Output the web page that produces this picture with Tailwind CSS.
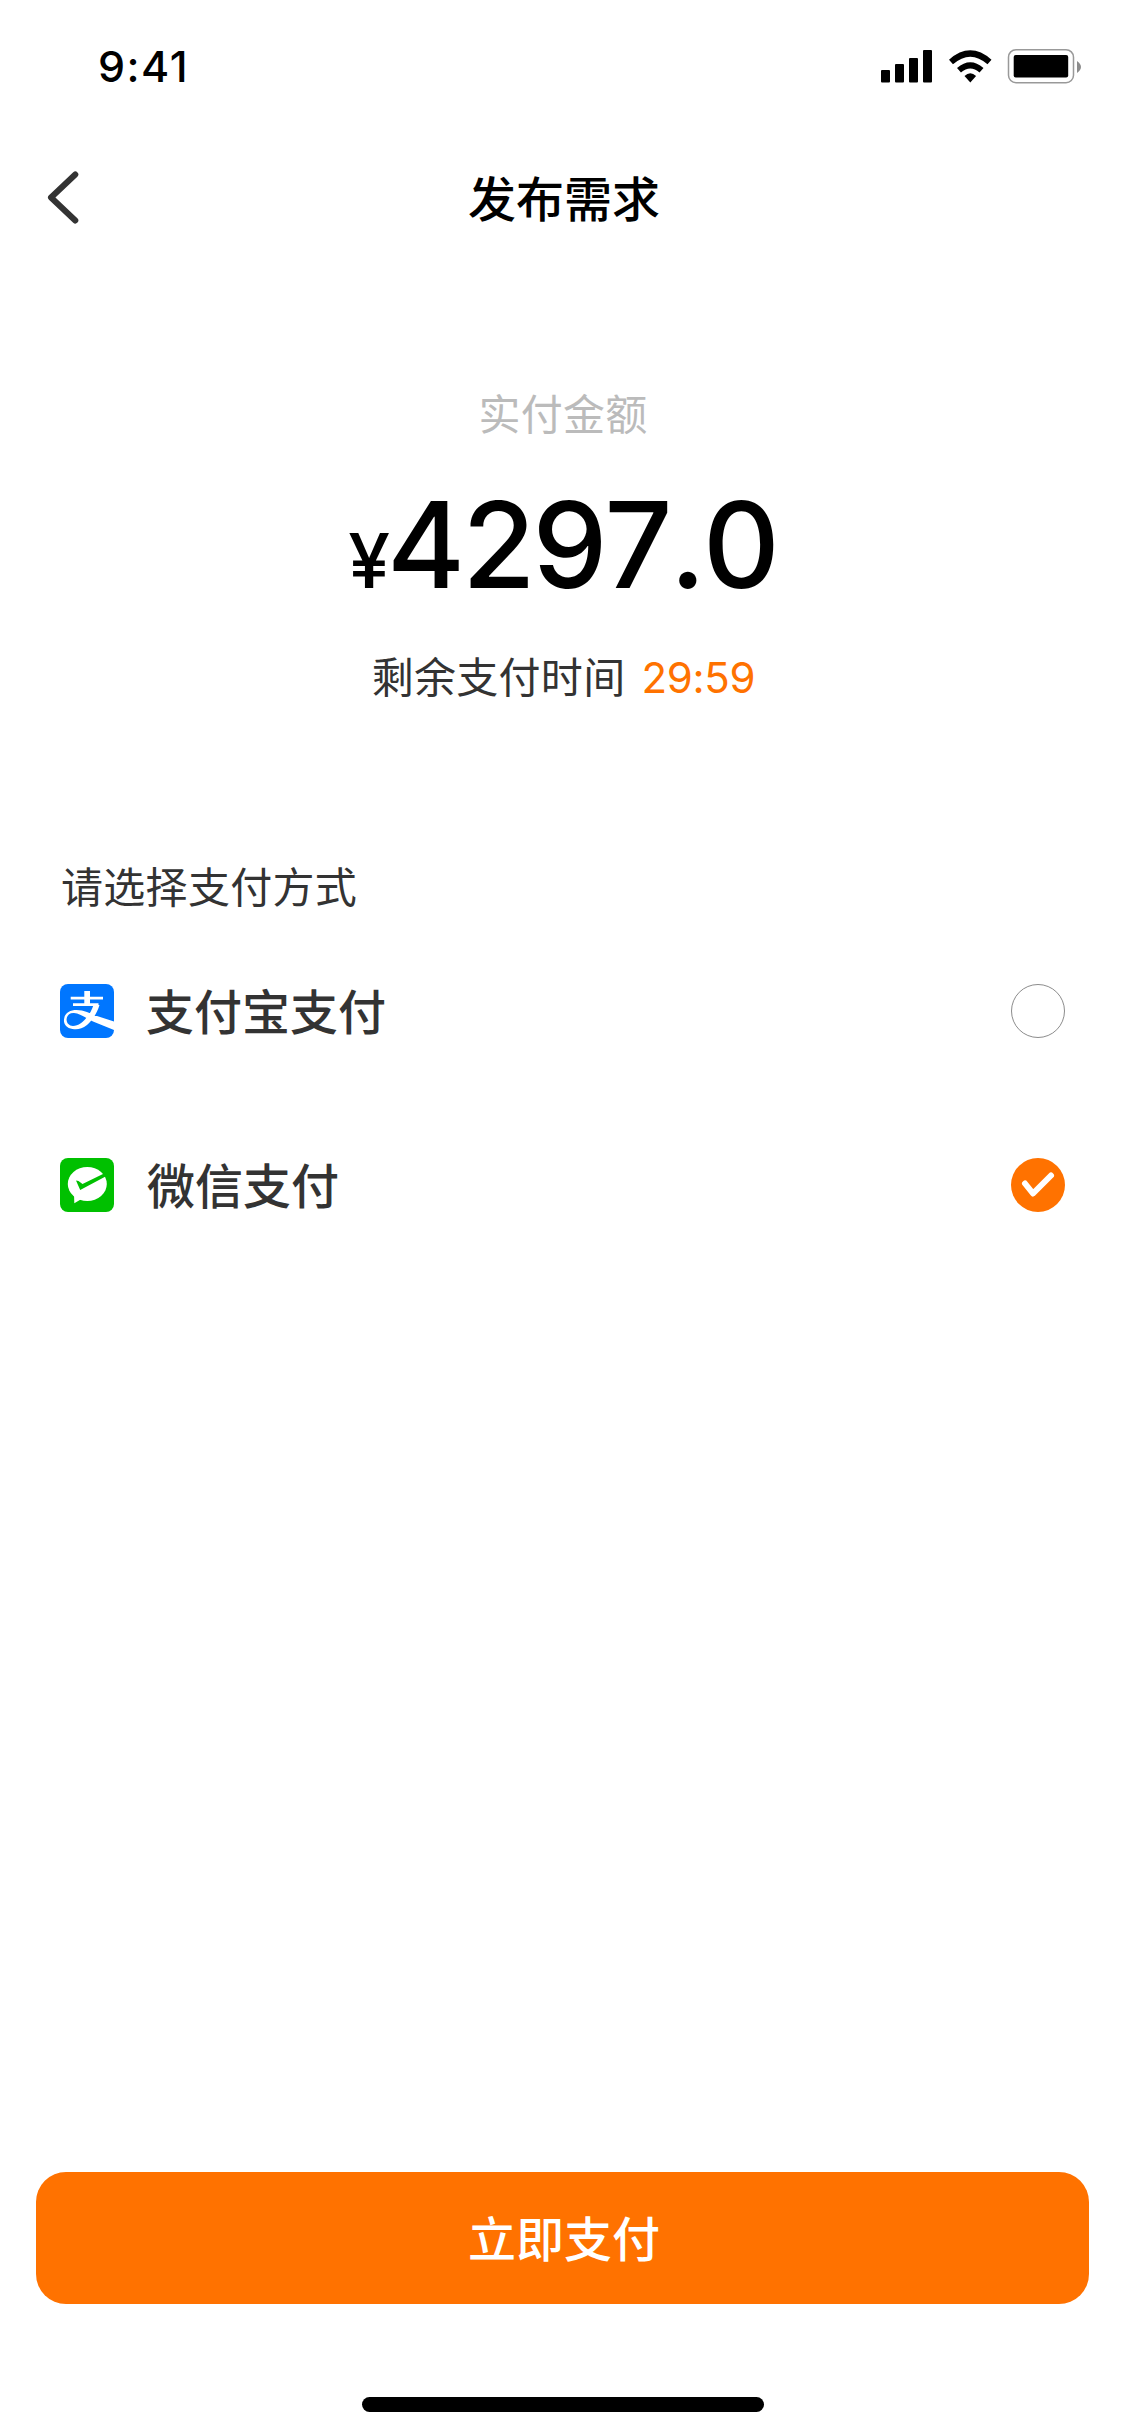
<!DOCTYPE html>
<html lang="zh-CN">
<head>
    <meta charset="UTF-8">
    <meta name="viewport" content="width=device-width, initial-scale=1.0">
    <title>发布需求</title>
    <script src="https://cdn.jsdelivr.net/npm/@tailwindcss/browser@4"></script>
</head>
<body class="bg-white font-['Inter','Noto_Sans_CJK_SC',sans-serif] text-[#333333]">
    <div class="w-[1125px] h-[2436px] flex flex-col overflow-hidden">
        <!-- status bar -->
        <div class="h-[132px] shrink-0 flex items-center justify-between pl-[98px] pr-[43px]">
            <span class="text-[43px] leading-none font-medium text-black tracking-[1.5px]">9:41</span>
            <svg class="w-[202px] h-[36px]" viewBox="880 48 202 36">
                <rect x="881" y="70" width="9" height="12.5" rx="1"/>
                <rect x="895" y="64" width="9" height="18.5" rx="1"/>
                <rect x="909" y="58" width="9" height="24.5" rx="1"/>
                <rect x="923" y="50" width="9" height="32.5" rx="1"/>
                <path d="M951 62Q970.3 45 989.5 62M959 70.300Q970.300 60.500 981.500 70.300" fill="none" stroke="#000" stroke-width="6"/>
                <path d="M964.500 76Q970.300 70.500 976.100 76L970.300 82.500Z"/>
                <rect x="1008.500" y="49.700" width="65" height="33" rx="7.500" fill="none" stroke="#999" stroke-width="1.500"/>
                <rect x="1013.700" y="55" width="54.500" height="22.500" rx="2"/>
                <path d="M1077 61Q1081 64 1081 67T1077 73Z" fill="#8c8c8c"/>
            </svg>
        </div>

        <!-- title bar -->
        <div class="h-[132px] shrink-0 grid grid-cols-3 items-center px-[46px]">
            <svg class="w-[34px] h-[54px]" viewBox="0 0 34 54" fill="none" stroke="#333" stroke-width="6">
                <path d="M29.300 3.500L5 26.500L29.300 49.500" stroke-linecap="round" stroke-linejoin="round"/>
            </svg>
            <h1 class="pt-[3px] pl-[3px] text-[48px] leading-[66px] font-medium text-black text-center">发布需求</h1>
        </div>

        <!-- amount -->
        <div class="pt-[121px] flex flex-col items-center">
            <p class="pl-px text-[42px] leading-[60px] text-[#bbbbbb] tracking-[0.3px]">实付金额</p>
            <p class="mt-[25px] flex items-baseline leading-[150px] font-medium text-black">
                <span class="text-[75px]">¥</span>
                <span class="-ml-[3px] text-[119px] [font-kerning:none] tracking-[-2.9px]">4297.0</span>
            </p>
            <p class="mt-[12px] pl-[2px] flex items-center gap-[16px] text-[42px] leading-[60px]">
                <span class="tracking-[0.3px]">剩余支付时间</span>
                <span class="font-normal text-[#ff7200] tracking-[-0.3px]">29:59</span>
            </p>
        </div>

        <!-- pay methods -->
        <div class="pt-[150px] px-[60px] flex flex-col">
            <p class="pl-px text-[42px] leading-[60px] tracking-[0.3px]">请选择支付方式</p>
            <div class="mt-[33px] h-[120px] flex items-center">
                <svg class="w-[54px] h-[54px]" viewBox="0 0 54 54">
                    <rect width="54" height="54" rx="8" fill="#0076ff"/>
                    <path d="M24.300 7H30V20H24.300ZM10.700 12.800H43V15.500H10.700ZM13 19.300H38.500V22H13Z" fill="#fff"/>
                    <path d="M33.500 21H39.500C37.500 28 33 36 27 41C22 45 17 46 12.500 45C6.500 44 3.500 40 4 35.500C4.500 29 10 26 16.500 26C24 26 30 29.500 37 32L54 37.500V46L33 37.500C26 34 20 29.500 14 29C10 28.700 7 31 6.600 35C6.300 39 9 42 13 42C21 42 30 32 33.500 21Z" fill="#fff"/>
                </svg>
                <span class="ml-[32px] pt-[3px] text-[48px] leading-[66px] font-medium">支付宝支付</span>
                <span class="ml-auto w-[54px] h-[54px] rounded-full border border-[#8c8c8c]"></span>
            </div>
            <div class="mt-[54px] h-[120px] flex items-center">
                <svg class="w-[54px] h-[54px]" viewBox="0 0 54 54">
                    <rect width="54" height="54" rx="8" fill="#00c000"/>
                    <ellipse cx="27.300" cy="26" rx="19.500" ry="17" fill="#fff"/>
                    <path d="M14 36L14.300 45.300L21.500 41Z" fill="#fff"/>
                    <path d="M16 22.500L20.200 32L46 18.300L43.500 15.800L22.500 26L18.500 23Z" fill="#00c000"/>
                </svg>
                <span class="ml-[33px] pt-[3px] text-[48px] leading-[66px] font-medium">微信支付</span>
                <svg class="ml-auto w-[54px] h-[54px]" viewBox="0 0 54 54">
                    <circle cx="27" cy="27" r="27" fill="#ff7200"/>
                    <path d="M14 25.500L22 35.500L40 17.500" fill="none" stroke="#fff" stroke-width="6" stroke-linecap="round" stroke-linejoin="round"/>
                </svg>
            </div>
        </div>

        <!-- footer -->
        <div class="mt-auto px-[36px] pb-[24px] flex flex-col items-center">
            <button class="w-full h-[132px] pt-[3px] pl-[3px] rounded-[30px] bg-[#ff7200] text-white text-[48px] leading-[66px] font-medium">立即支付</button>
            <div class="mt-[93px] w-[402px] h-[15px] rounded-full bg-black"></div>
        </div>
    </div>
</body>
</html>
